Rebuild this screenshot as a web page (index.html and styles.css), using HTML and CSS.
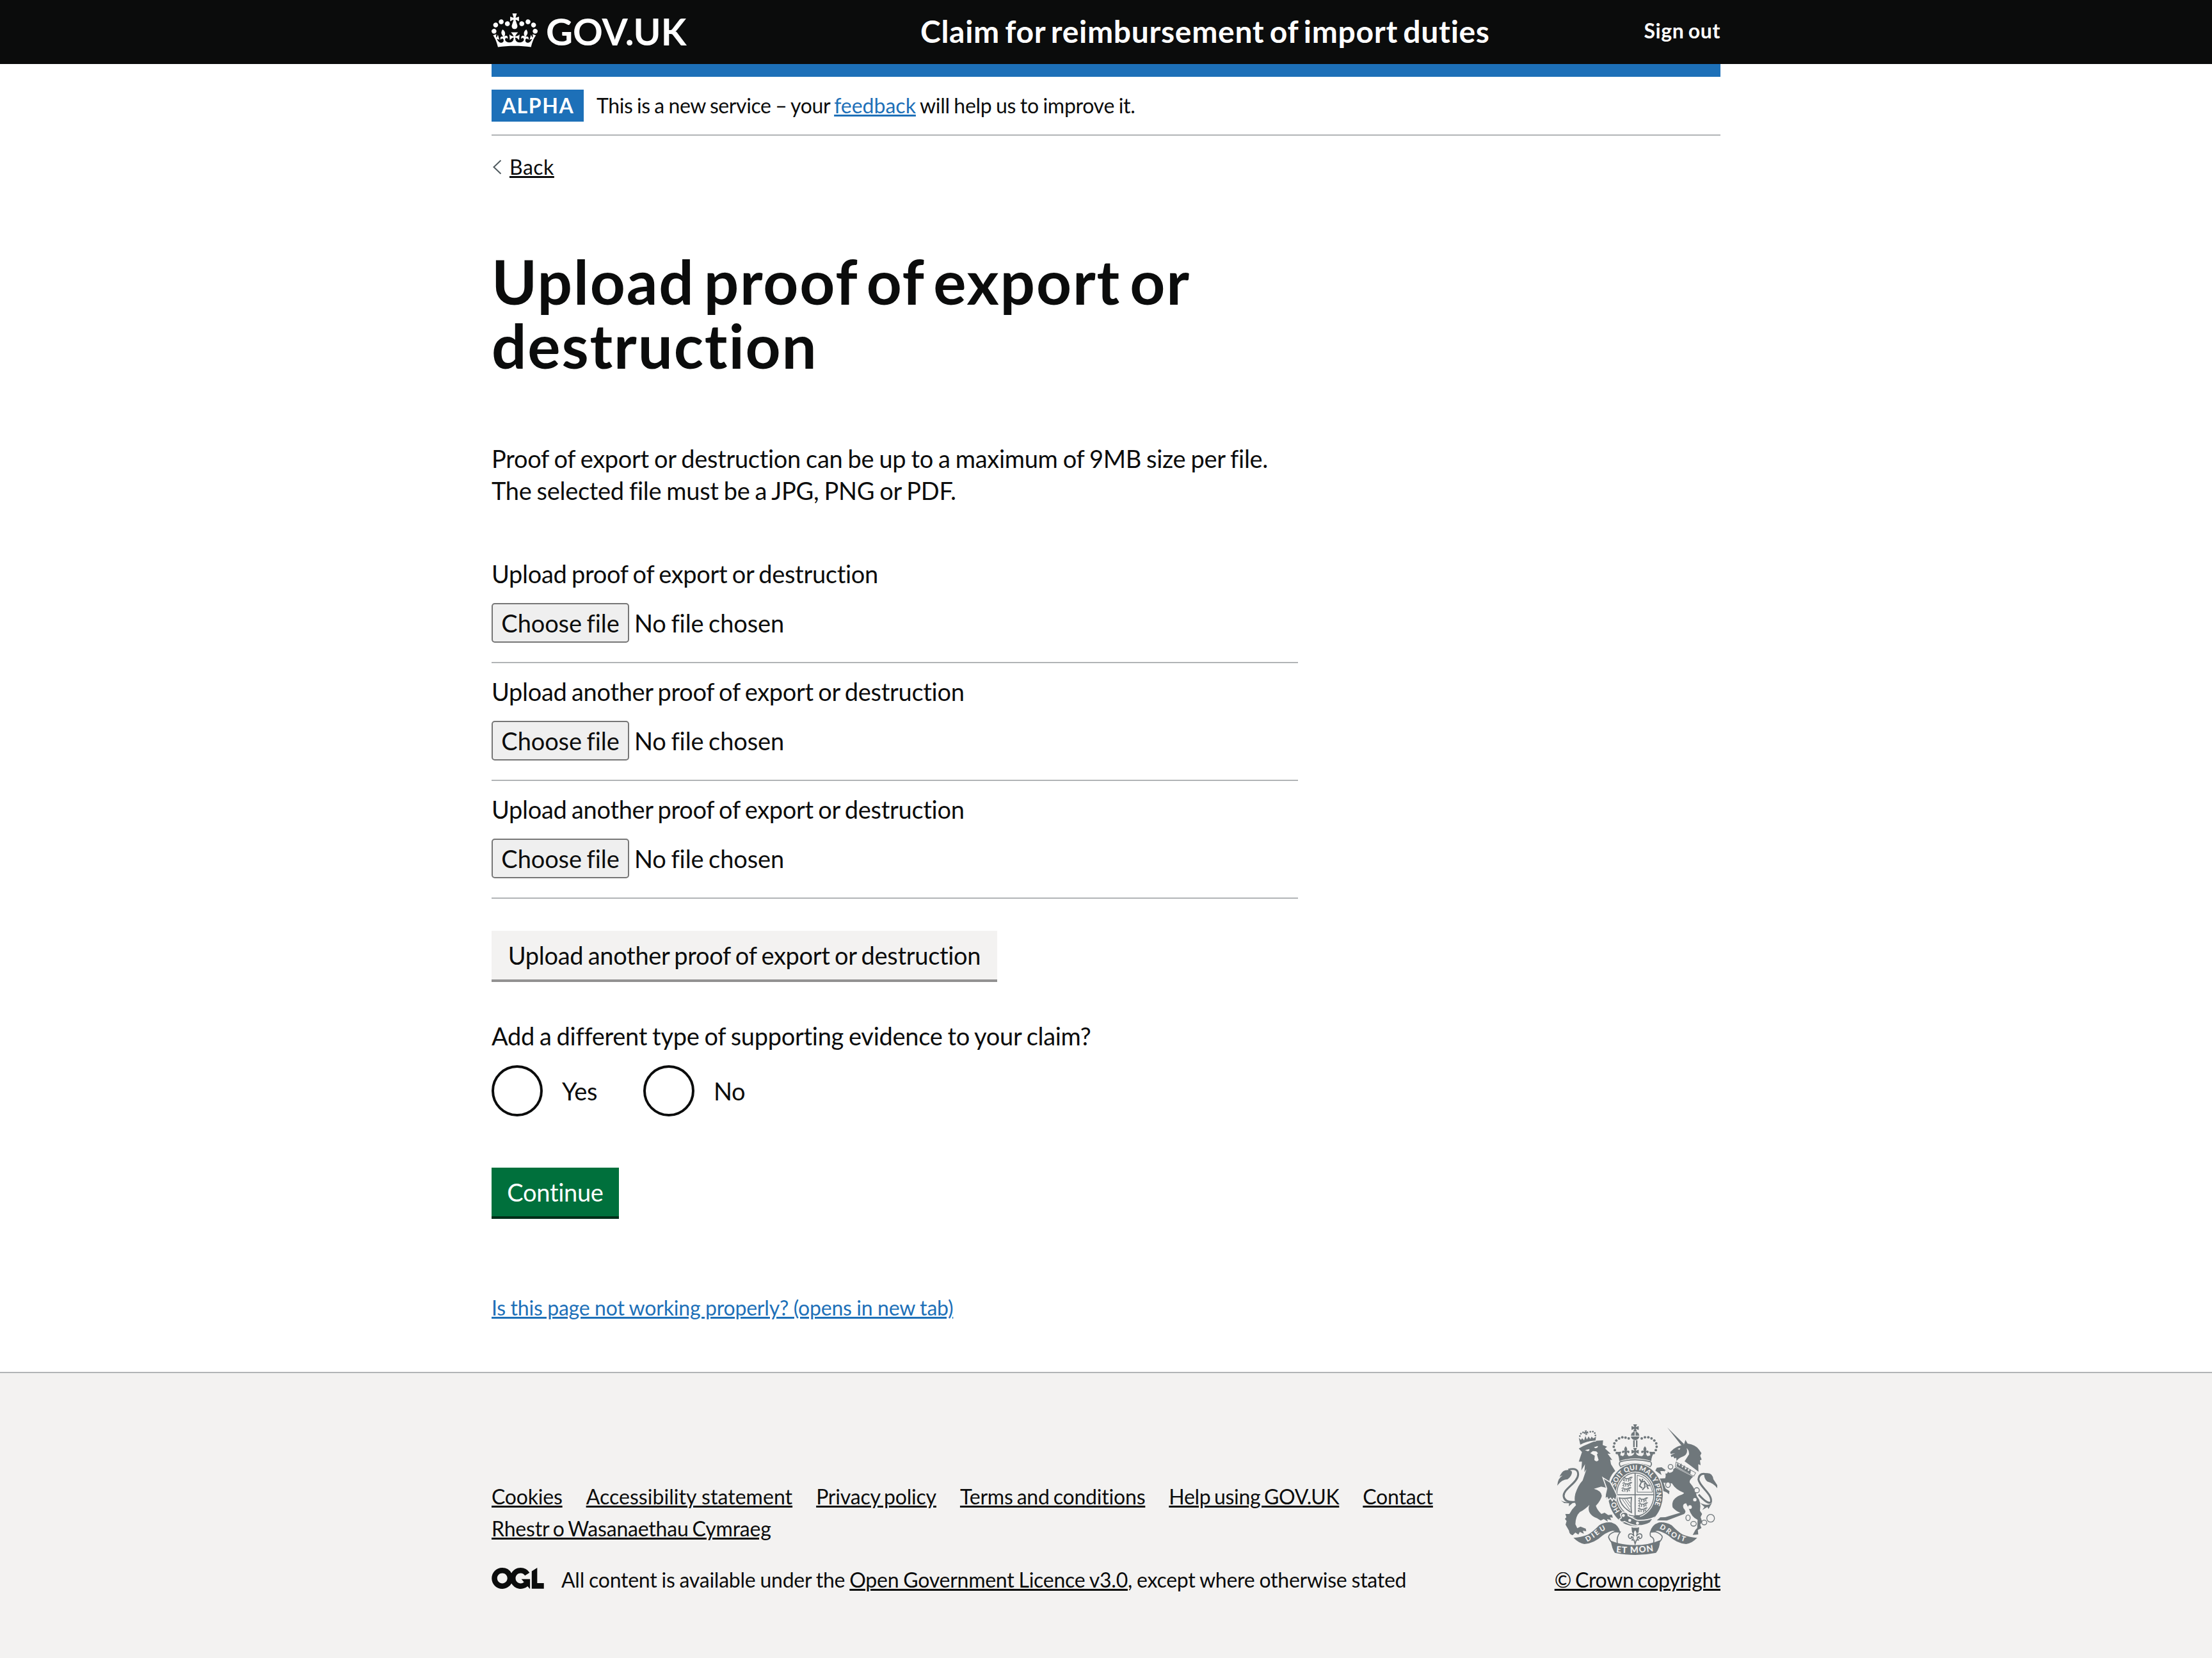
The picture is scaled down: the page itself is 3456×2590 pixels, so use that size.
FILE: index.html
```
<!DOCTYPE html>
<html lang="en">
<head>
<meta charset="utf-8">
<title>Upload proof of export or destruction</title>
<link rel="stylesheet" href="styles.css">
</head>
<body>
<header class="header">
  <div class="container header-inner">
    <a class="logo" href="#">
      <svg class="crown" viewBox="0 0 132 97" width="72" height="53"><path fill="currentColor" fill-rule="evenodd" d="M25 30.2c3.5 1.5 7.7-.2 9.1-3.7 1.5-3.6-.2-7.8-3.9-9.2-3.6-1.4-7.6.3-9.1 3.9-1.4 3.5.3 7.5 3.9 9zM9 39.5c3.6 1.5 7.8-.2 9.2-3.7 1.5-3.6-.2-7.8-3.9-9.1-3.6-1.5-7.6.2-9.1 3.8-1.4 3.5.3 7.5 3.8 9zM4.4 57.2c3.5 1.5 7.7-.2 9.1-3.8 1.5-3.6-.2-7.7-3.9-9.1-3.5-1.5-7.6.3-9.1 3.8-1.4 3.5.3 7.6 3.9 9.1zm38.3-21.4c3.5 1.5 7.7-.2 9.1-3.8 1.5-3.6-.2-7.7-3.9-9.1-3.6-1.5-7.6.3-9.1 3.8-1.3 3.6.4 7.7 3.9 9.1zm64.4-5.6c-3.6 1.5-7.8-.2-9.1-3.7-1.5-3.6.2-7.8 3.8-9.2 3.6-1.4 7.7.3 9.2 3.9 1.3 3.5-.4 7.5-3.9 9zm15.9 9.3c-3.6 1.5-7.7-.2-9.1-3.7-1.5-3.6.2-7.8 3.7-9.1 3.6-1.5 7.7.2 9.2 3.8 1.5 3.5-.3 7.5-3.8 9zm4.7 17.7c-3.6 1.5-7.8-.2-9.2-3.8-1.5-3.6.2-7.7 3.9-9.1 3.6-1.5 7.7.3 9.2 3.8 1.3 3.5-.4 7.6-3.9 9.1zM89.3 35.8c-3.6 1.5-7.8-.2-9.2-3.8-1.4-3.6.2-7.7 3.9-9.1 3.6-1.5 7.7.3 9.2 3.8 1.4 3.6-.3 7.7-3.9 9.1zM69.7 17.7l8.9 4.7V9.3l-8.9 2.8c-.2-.3-.5-.6-.9-.9L72.4 0H59.6l3.5 11.2c-.3.3-.6.5-.9.9l-8.8-2.8v13.1l8.8-4.7c.3.3.6.7.9.9l-5 15.4v.1c-.2.8-.4 1.6-.4 2.4 0 4.1 3.1 7.5 7 8.1h.2c.3 0 .7.1 1 .1.4 0 .7 0 1-.1h.2c4-.6 7.1-4.1 7.1-8.1 0-.8-.1-1.7-.4-2.4V34l-5.1-15.4c.4-.2.7-.6 1-.9zM66 92.8c16.9 0 32.8 1.1 47.1 3.2 4-16.9 8.9-26.7 14-33.5l-9.6-3.4c1 4.9 1.1 7.2 0 10.2-1.5-1.4-3-4.3-4.2-8.7L108.6 76c2.8-2 5-3.2 7.5-3.3-4.4 9.4-10 11.9-13.6 11.2-4.3-.8-6.3-4.6-5.6-7.9 1-4.7 5.7-5.9 8-.5 4.3-8.7-3-11.4-7.6-8.8 7.1-7.2 7.9-13.5 2.1-21.1-8 6.1-8.1 12.3-4.5 20.8-4.7-5.4-12.1-2.5-9.5 6.2 3.4-5.2 7.9-2 7.2 3.1-.6 4.3-6.4 7.8-13.5 7.2-10.3-.9-10.9-8-11.2-13.8 2.5-.5 7.1 1.8 11 7.3L80.2 60c-4.1 4.4-8 5.3-12.3 5.4 1.4-4.4 8-11.6 8-11.6H55.5s6.4 7.2 7.9 11.6c-4.2-.1-8-1-12.3-5.4l1.4 16.4c3.9-5.5 8.5-7.7 10.9-7.3-.3 5.8-.9 12.8-11.1 13.8-7.2.6-12.9-2.9-13.5-7.2-.7-5 3.8-8.3 7.1-3.1 2.7-8.7-4.6-11.6-9.4-6.2 3.7-8.5 3.6-14.7-4.6-20.8-5.8 7.6-5 13.9 2.2 21.1-4.7-2.6-11.9.1-7.7 8.8 2.3-5.5 7.1-4.2 8.1.5.7 3.3-1.3 7.1-5.7 7.9-3.5.7-9-1.8-13.5-11.2 2.5.1 4.7 1.3 7.5 3.3l-4.7-15.4c-1.2 4.4-2.7 7.2-4.3 8.7-1.1-3-.9-5.3 0-10.2l-9.5 3.4c5 6.9 9.9 16.7 14 33.5 14.8-2.1 30.8-3.2 47.7-3.2z"/></svg>
      <span class="logotype">GOV.UK</span>
    </a>
    <a class="service-name" href="#">Claim for reimbursement of import duties</a>
    <a class="sign-out" href="#">Sign out</a>
  </div>
</header>

<div class="container">
  <div class="blue-bar"></div>
  <div class="phase-banner">
    <strong class="tag">ALPHA</strong>
    <span class="phase-text">This is a new service – your <a class="link" href="#">feedback</a><span class="phase-tail"> will help us to improve it.</span></span>
  </div>
  <div class="back">
    <svg class="chevron" viewBox="0 0 16 24" width="16" height="24"><path d="M14.500 1.500L3.500 12L14.500 22.500" fill="none" stroke="#505a5f" stroke-width="2"/></svg>
    <a class="back-link" href="#">Back</a>
  </div>

  <main class="main">
    <h1 class="title">Upload proof of export or<br>destruction</h1>
    <p class="intro">Proof of export or destruction can be up to a maximum of 9MB size per file.<br>The selected file must be a JPG, PNG or PDF.</p>

    <div class="upload">
      <span class="upload-label">Upload proof of export or destruction</span>
      <div class="file"><button class="choose">Choose file</button><span>No file chosen</span></div>
    </div>
    <div class="upload">
      <span class="upload-label">Upload another proof of export or destruction</span>
      <div class="file"><button class="choose">Choose file</button><span>No file chosen</span></div>
    </div>
    <div class="upload">
      <span class="upload-label">Upload another proof of export or destruction</span>
      <div class="file"><button class="choose">Choose file</button><span>No file chosen</span></div>
    </div>

    <button class="button button-secondary">Upload another proof of export or destruction</button>

    <p class="question">Add a different type of supporting evidence to your claim?</p>
    <div class="radios">
      <label class="radio"><span class="radio-circle"></span><span class="radio-label">Yes</span></label>
      <label class="radio"><span class="radio-circle"></span><span class="radio-label">No</span></label>
    </div>

    <button class="button button-primary">Continue</button>
    <p class="problem"><a class="link" href="#">Is this page not working properly? (opens in new tab)</a></p>
  </main>
</div>

<footer class="footer">
  <div class="container footer-inner">
    <div class="footer-meta">
      <nav class="footer-links">
        <a href="#">Cookies</a>
        <a class="accessibility" href="#">Accessibility statement</a>
        <a href="#">Privacy policy</a>
        <a href="#">Terms and conditions</a>
        <a class="help" href="#">Help using GOV.UK</a>
        <a href="#">Contact</a>
        <a href="#">Rhestr o Wasanaethau Cymraeg</a>
      </nav>
      <div class="licence">
        <svg class="ogl" viewBox="0 0 483.2 195.7" width="82" height="33"><path fill="currentColor" d="M421.5 142.8V.1l-50.7 32.3v161.1h112.4v-50.7zm-122.3-9.6A47.12 47.12 0 0 1 221 97.8c0-26 21.1-47.1 47.1-47.1 16.7 0 31.4 8.7 39.7 21.8l42.7-27.2A97.63 97.63 0 0 0 268.1 0c-36.5 0-68.3 20.1-85.1 49.7A98 98 0 0 0 97.8 0C43.9 0 0 43.9 0 97.8s43.9 97.8 97.8 97.8c36.5 0 68.3-20.1 85.1-49.7a97.76 97.76 0 0 0 149.6 25.4l19.4 22.2h3v-87.8h-80l24.3 27.5zM97.8 145c-26 0-47.1-21.1-47.1-47.1s21.1-47.1 47.1-47.1 47.1 21.1 47.1 47.1S123.8 145 97.8 145"/></svg>
        <span class="licence-text">All content is available under the <a href="#">Open Government Licence v3.0</a>, except where otherwise stated</span>
      </div>
    </div>
    <a class="copyright" href="#">
      <svg class="arms" viewBox="96 75 750 612" width="250" height="204">
        <defs>
          <path id="garter" d="M463 519A98 115 0 0 1 463 289A98 115 0 0 1 463 519"/>
          <path id="dieu" d="M236 626Q275 604 292 588T340 562"/>
          <path id="droit" d="M574 562Q600 575 622 593T704 628"/>
          <path id="mon" d="M372 675Q461 683 552 668"/>
          <g id="fleur"><path d="M0-22C-9-12-8-4-4 2-10-6-20-2-17 7-14 13-9 10-9 5-5 7-4 12-8 18H8C4 12 5 7 9 5 9 10 14 13 17 7 20-2 10-6 4 2 8-4 9-12 0-22z"/></g>
          <g id="pattee"><path d="M-9-17H9L3-4 17-9V9L3 4 9 17H-9L-3 4-17 9V-9L-3-4z"/></g>
          <g id="beast" fill="none" stroke="#6f777b" stroke-width="4"><path d="M2 5l7-4 6 6h13l8-5 6 5M10 8l-6 7 7 4M17 9v11M25 9l6 6-5 6M33 7l7 10M38 0l9 1"/></g>
        </defs>
        <g class="arms-ink">
          <!-- lion -->
          <path d="M197 188L217 177 275 152 311 150 309 172 330 180 320 188 347 213 332 212 354 242 344 240 348 262 368 294Q350 305 340 338L372 395 374 414 360 433 352 418 344 431 336 418 328 425 324 408 331 397 325 372 302 367 268 377Q302 385 305 410 300 432 277 457 284 478 303 495L318 489 335 500 352 498 357 512 343 511 350 524 330 519 333 531 314 519 300 526 283 515Q255 505 246 485 240 468 247 452 226 474 202 486 182 505 181 543L190 562 205 554 230 564 232 576 216 574 221 588 202 579 195 592 181 582 168 595Q153 591 151 573L135 545 140 528 132 518 139 510 134 495 153 495Q164 473 184 454 173 432 181 400 193 361 215 338L233 285 223 299 226 262 209 291 212 250 197 250 212 205z"/>
          <path d="M204 170L197 138 207 148 213 140 222 150 228 130 235 146 243 131 251 144 257 133 265 141 278 133 275 154Q240 151 204 170z"/>
          <g><circle cx="202" cy="130" r="4"/><circle cx="207" cy="119" r="4"/><circle cx="217" cy="113" r="4"/><circle cx="251" cy="110" r="4"/><circle cx="263" cy="109" r="4"/><circle cx="272" cy="116" r="4"/><circle cx="275" cy="127" r="4"/></g>
          <use href="#pattee" transform="translate(231 114) rotate(-10) scale(.6)"/>
          <path d="M96 362Q100 325 121 316 108 317 106 324 115 295 134 290 156 285 165 296 166 316 145 332 118 332 96 362z"/>
          <path class="line" stroke-width="9" d="M148 288Q194 275 194 310C192 350 124 377 126 411Q130 443 180 438"/>
          <path d="M113 432Q135 445 178 436L150 459 152 445 129 444z"/>
          <!-- unicorn -->
          <path d="M612 90L691 168 680 176zM690 170L697 148 707 165Q744 170 760 193L772 210 766 222 773 240 765 244 768 266 757 262 758 297Q710 260 693 248L714 215Q714 195 702 187 712 213 685 226 666 232 655 247L654 232 645 235 640 225 631 229 628 219 649 210 627 214 626 205 642 190Q657 177 690 170z"/>
          <path d="M650 278L733 320Q713 337 717 348 744 378 750 412 772 435 765 480L775 495 768 510 775 530 766 545 772 561 755 570 757 591 731 593 744 569 752 561 754 523Q724 508 713 470L700 445Q680 448 688 468 704 483 691 495L610 526 563 525 579 511 603 510 673 489Q650 480 637 464 628 425 672 407 691 401 690 396 650 381 634 352L594 349 604 376 622 388 620 403 609 394 590 386 577 347 554 330 602 328Q609 307 596 294L579 294 585 313 556 292 563 278 585 276 622 302Q643 299 640 285z"/>
          <path d="M785 306Q822 296 828 332L846 360V374Q830 352 799 343 783 328 785 306z"/>
          <path class="line" stroke-width="9" d="M812 314Q762 293 758 333C762 367 822 398 817 438Q806 456 759 404"/>
          <path d="M763 441Q800 463 822 442L805 472 800 462 776 476 786 462z"/>
          <!-- royal crown -->
          <use href="#pattee" x="461" y="92"/>
          <circle cx="461" cy="129" r="20"/><path d="M452 150h7v32h-7zM465 150h7v32h-7z"/>
          <g><circle cx="375" cy="209" r="6"/><circle cx="366" cy="196" r="6"/><circle cx="361" cy="180" r="6"/><circle cx="364" cy="164" r="6"/><circle cx="373" cy="151" r="6"/><circle cx="386" cy="141" r="6"/><circle cx="401" cy="136" r="6"/><circle cx="416" cy="137" r="6"/><circle cx="431" cy="141" r="6"/><circle cx="492" cy="141" r="6"/><circle cx="507" cy="136" r="6"/><circle cx="523" cy="136" r="6"/><circle cx="538" cy="141" r="6"/><circle cx="551" cy="151" r="6"/><circle cx="560" cy="164" r="6"/><circle cx="562" cy="180" r="6"/><circle cx="558" cy="196" r="6"/><circle cx="549" cy="209" r="6"/></g>
          <path d="M373 205L396 203 391 220 404 224 410 218H425L431 224 446 222 450 218H472L477 222 493 224 500 218H514L520 224 533 220 527 203 552 205Q537 225 537 247 461 222 387 247 386 222 373 205z"/>
          <use href="#fleur" x="417" y="200"/><use href="#fleur" x="507" y="200"/><use href="#pattee" x="461" y="203"/>
          <path class="line" stroke-width="5" d="M391 250Q461 232 533 250 543 262 532 273 461 243 393 273 383 262 391 250z"/>
          <!-- garter and shield -->
          <ellipse cx="463" cy="406" rx="132" ry="151" class="paper"/>
          <ellipse cx="463" cy="406" rx="128" ry="147"/>
          <ellipse cx="462" cy="404" rx="93" ry="108" class="paper"/>
          <ellipse cx="462" cy="404" rx="87" ry="101" class="line" stroke-width="4"/>
          <path class="line" stroke-width="5" d="M461 303V510M373 405H551"/>
          <use href="#beast" x="402" y="322"/><use href="#beast" x="400" y="347"/><use href="#beast" x="396" y="371"/>
          <use href="#beast" x="474" y="419"/><use href="#beast" x="474" y="442"/><use href="#beast" x="472" y="466"/>
          <path class="line" stroke-width="3" d="M471 313V393H543M471 313Q530 325 543 393"/>
          <path class="line" stroke-width="6" d="M482 331l8 15 14-4 14 18 14 2M490 346l-8 18 13 10M505 350l2 18-12 14M515 362l8 16M497 330l-4 12"/>
          <path class="line" stroke-width="5" d="M387 420Q410 425 444 418 440 455 444 488 398 465 387 420z"/>
          <path class="line" stroke-width="3" d="M401 426L437 478M412 425L438 462M423 424L438 446"/>
          <path d="M452 510l14-10 20 2-6 14z"/>
        </g>
        <g class="motto">
          <text font-size="32"><textPath href="#garter" startOffset="84">HO<tspan dx="69">SOIT QUI MAL Y PENSE</tspan></textPath></text>
        </g>
        <g class="arms-ink">
          <path class="edge" d="M310 325L345 347 362 378 376 408 370 432 360 422 354 433 346 421 336 430 330 418 320 424 322 402 328 376z"/>
          <path class="edge" d="M392 497Q400 484 417 487 431 491 428 503L470 524Q515 527 548 512L531 536Q475 566 412 530 391 539 387 520L397 513z"/>
          <circle class="paper" cx="436" cy="525" r="7"/><circle class="paper" cx="472" cy="538" r="7"/><circle class="paper" cx="406" cy="502" r="7"/>
          <!-- pendant -->
          <path d="M444 557Q461 562 480 557L477 583H447z"/>
          <g class="pendant"><path d="M461 567C449 581 452 590 456 600 446 580 425 588 431 604 437 615 446 608 444 602 456 604 453 614 444 617H456L461 635 467 617H479C470 614 467 604 479 602 477 608 486 615 492 604 498 588 477 580 467 600 471 590 474 581 461 567z"/></g>
          <!-- ribbon -->
          <path class="fold" d="M365 578Q334 590 337 605 344 622 352 628 L378 634Q372 605 391 580zM556 578Q590 590 588 605 582 622 572 628L546 634Q556 610 534 600 530 592 533 580z"/>
          <path d="M172 607Q205 606 240 592 266 576 292 548 320 531 350 535 384 546 391 580L356 574Q332 579 308 596 270 632 223 636 200 634 172 607z"/>
          <path d="M752 607Q719 606 685 592 659 576 633 548 602 531 573 535 539 546 531 580L567 574Q591 579 617 596 655 632 700 636 726 634 752 607z"/>
          <path d="M347 620Q395 640 461 641 525 641 578 618 577 656 559 677 461 697 366 677 352 656 347 620z"/>
        </g>
        <g class="motto">
          <text font-size="33"><textPath href="#dieu" textLength="106">DIEU</textPath></text>
          <text font-size="33"><textPath href="#droit" textLength="136">DROIT</textPath></text>
          <text font-size="41"><textPath href="#mon" textLength="176">ET MON</textPath></text>
        </g>
        <g class="arms-detail">
          <path class="paper" d="M226 196l20-5q4 8-7 10zM268 182l18-6q2 10-12 11zM251 210l12-10 16 2 8 8-5 6 8 26q-9 12-20 0l2-20zM660 190l13-4-4 8z"/>
          <path class="collar" d="M653 251L745 302 736 318 650 275z"/>
          <path class="arms-ink" d="M655 272l5-18 8 16 10-13 3 22 13-13 1 22 14-12-1 19 15-9-3 22z"/>
          <g class="chain"><circle cx="627" cy="274" r="11"/><ellipse class="paper" cx="615" cy="358" rx="11" ry="13"/><circle class="paper" cx="750" cy="384" r="12"/><ellipse cx="709" cy="513" rx="10" ry="13"/><ellipse cx="735" cy="541" rx="13" ry="11"/><ellipse cx="785" cy="535" rx="12" ry="11"/><circle cx="815" cy="515" r="18"/></g>
          <circle class="paper" cx="606" cy="298" r="8"/><circle class="paper" cx="741" cy="428" r="8"/><circle class="paper" cx="718" cy="463" r="9"/>
          <path class="paper" d="M441 128h41v4h-41zM459 108h4v20h-4z"/>
          <path class="paper-line" d="M216 170Q244 154 278 153"/>
        </g>
      </svg>
      <span class="copyright-text">© Crown copyright</span>
    </a>
  </div>
</footer>
</body>
</html>
```
FILE: styles.css
```
* { box-sizing: border-box; }

body {
  margin: 0;
  min-height: 2590px;
  display: flex;
  flex-direction: column;
  background: #fff;
  color: #0b0c0c;
  font: 400 38px/50px Lato, "Liberation Sans", sans-serif;
  font-variant-ligatures: none;
  letter-spacing: -0.3px;
  word-spacing: -2px;
}

a {
  color: inherit;
  text-decoration-thickness: 3px;
  text-underline-offset: 2px;
}

p, h1 { margin: 0; }

button {
  font: inherit;
  color: inherit;
  letter-spacing: inherit;
  word-spacing: inherit;
  font-variant-ligatures: inherit;
  white-space: nowrap;
  padding: 0;
}

svg { display: block; flex: none; }

.container { width: 1920px; margin: 0 auto; }

.header { background: #0b0c0c; color: #fff; height: 100px; }
.header a { text-decoration: none; font-weight: 700; }
.header-inner {
  display: grid;
  grid-template-columns: 670px 1fr auto;
  align-items: start;
}
.logo { display: flex; gap: 13px; letter-spacing: 0; }
.crown { margin-top: 21px; }
.logotype { font-size: 58px; line-height: 60px; padding-top: 19px; }
.service-name {
  font-size: 48px;
  line-height: 60px;
  padding-top: 19px;
  letter-spacing: 0.7px;
  word-spacing: -4px;
}
.sign-out {
  font-size: 32px;
  line-height: 40px;
  padding-top: 28px;
  letter-spacing: 0.6px;
}

.blue-bar { height: 20px; background: #1d70b8; }
.phase-banner {
  display: flex;
  gap: 20px;
  padding: 20px 0;
  border-bottom: 2px solid #b1b4b6;
  font-size: 32px;
}
.tag {
  width: 144px;
  text-align: center;
  background: #1d70b8;
  color: #fff;
  font-weight: 700;
  font-size: 32px;
  letter-spacing: 1.600px;
  text-indent: 1px;
}
.phase-text { letter-spacing: -0.4px; word-spacing: -1.2px; }
.phase-text .link { letter-spacing: 0; }
.phase-tail { letter-spacing: -0.3px; word-spacing: -1.2px; }
.link { color: #1d70b8; }

.back {
  display: flex;
  align-items: center;
  gap: 12px;
  margin-top: 29px;
  font-size: 32px;
  line-height: 40px;
}
.back-link { letter-spacing: 0.5px; }

.main { width: 1260px; display: flex; flex-direction: column; align-items: flex-start; }
.title {
  margin: 108px 0 102px;
  font-size: 96px;
  line-height: 100px;
  font-weight: 700;
  letter-spacing: 1.85px;
  word-spacing: -11px;
  white-space: nowrap;
}
.intro { margin-bottom: 61px; white-space: nowrap; word-spacing: -1.300px; }

.upload {
  width: 100%;
  display: flex;
  flex-direction: column;
  gap: 21px;
  padding: 19px 0 30px;
  border-bottom: 2px solid #b1b4b6;
}
.file {
  display: flex;
  align-items: center;
  gap: 8px;
  height: 62px;
  line-height: 57px;
  letter-spacing: -0.1px;
}
.choose {
  width: 215px;
  height: 62px;
  border: 2px solid #767676;
  border-radius: 5px;
  background: #efefef;
}

.button { height: 76px; border: 0; line-height: 76px; }
.button-secondary {
  width: 790px;
  margin-top: 50px;
  background: #f3f2f1;
  box-shadow: 0 4px 0 #929191;
}
.button-primary {
  width: 199px;
  margin-top: 80px;
  background: #00703c;
  color: #fff;
  box-shadow: 0 4px 0 #002d18;
}

.question { margin-top: 63px; word-spacing: -1.400px; }
.radios { display: flex; margin-top: 21px; }
.radio { display: flex; gap: 30px; width: 237px; line-height: 80px; }
.radio-circle { width: 80px; height: 80px; border: 4px solid #0b0c0c; border-radius: 50%; }

.problem { margin: 118px 0 75px; font-size: 32px; letter-spacing: -0.2px; word-spacing: -0.4px; }

.footer {
  flex: 1;
  border-top: 2px solid #b1b4b6;
  background: #f3f2f1;
  font-size: 32px;
  padding-top: 80px;
}
.footer-inner { display: flex; justify-content: space-between; align-items: flex-end; }
.footer-meta { width: 1560px; }
.footer-links {
  display: flex;
  flex-wrap: wrap;
  column-gap: 37px;
  margin-bottom: 30px;
  letter-spacing: -0.2px;
}
.accessibility { letter-spacing: 0.05px; word-spacing: 0; }
.help { letter-spacing: -0.35px; }
.licence { display: flex; gap: 27px; }
.licence-text { letter-spacing: -0.25px; word-spacing: -0.9px; }
.ogl { margin-top: 6px; }
.copyright {
  display: flex;
  flex-direction: column;
  align-items: center;
  gap: 14px;
}

.arms-ink { fill: #6f777b; }
.arms-ink .line, .chain { fill: none; stroke: #6f777b; }
.chain { stroke-width: 4; }
.paper { fill: #f3f2f1; }
.edge { stroke: #f3f2f1; stroke-width: 5; }
.fold, .pendant { fill: #f3f2f1; stroke: #6f777b; stroke-width: 5; }
.collar { fill: #f3f2f1; stroke: #6f777b; stroke-width: 3; }
.paper-line { fill: none; stroke: #f3f2f1; stroke-width: 4; }
.motto { fill: #f3f2f1; font-weight: 900; letter-spacing: 0; word-spacing: 0; }
```
